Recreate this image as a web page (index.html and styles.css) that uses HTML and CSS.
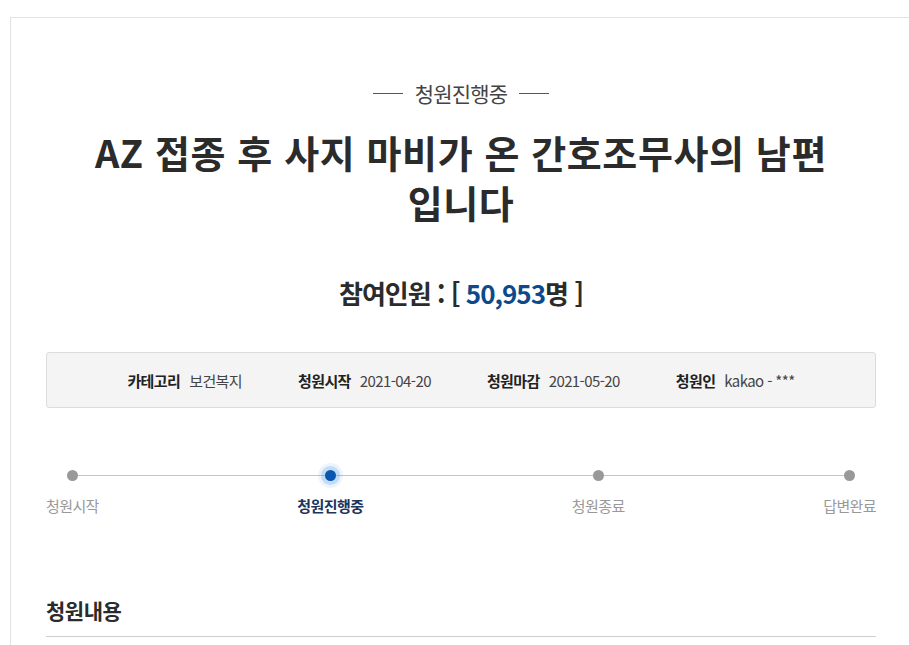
FILE: index.html
```html
<!DOCTYPE html>
<html lang="ko">
<head>
    <meta charset="UTF-8">
    <meta name="viewport" content="width=device-width, initial-scale=1.0">
    <title>청원진행중</title>
    <link rel="stylesheet" href="styles.css">
</head>
<body>

<div class="petition">
    <!-- status -->
    <p class="status"><span class="dash"></span>청원진행중<span class="dash"></span></p>

    <h1 class="title">AZ 접종 후 사지 마비가 온 간호조무사의 남편<br>입니다</h1>

    <h2 class="count">참여인원 : [ <span class="num">50,953</span>명 ]</h2>

    <!-- info box -->
    <ul class="info">
        <li><strong>카테고리</strong>보건복지</li>
        <li><strong>청원시작</strong>2021-04-20</li>
        <li><strong>청원마감</strong>2021-05-20</li>
        <li><strong>청원인</strong>kakao - ***</li>
    </ul>

    <!-- progress -->
    <ol class="steps">
        <li class="step"><span class="dot"></span>청원시작</li>
        <li class="step active"><span class="dot"></span>청원진행중</li>
        <li class="step"><span class="dot"></span>청원종료</li>
        <li class="step"><span class="dot"></span>답변완료</li>
    </ol>

    <h3 class="section">청원내용</h3>
</div>

</body>
</html>
```

FILE: styles.css
```css
* {
    box-sizing: border-box;
}
body {
    margin: 0;
    padding: 0;
    background: #fff;
    font-family: "Noto Sans CJK KR", "Noto Sans", sans-serif;
    color: #333;
}
.petition {
    margin: 17px 0 0 10px;
    width: 936px;
    padding: 60px 70px 0 35px;
    border-top: 1px solid #e2e2e2;
    border-left: 1px solid #e2e2e2;
    height: 700px;
}
.status {
    margin: 0;
    display: flex;
    justify-content: center;
    align-items: center;
    gap: 12px;
    font-size: 21px;
    line-height: 30px;
    font-weight: 400;
    letter-spacing: -0.8px;
    color: #444;
}
.dash {
    width: 30px;
    border-top: 1px solid #555;
}
.title {
    margin: 19px 0 0;
    text-align: center;
    font-size: 38px;
    line-height: 50px;
    font-weight: 700;
    letter-spacing: 0.6px;
    color: #2b2b2b;
}
.count {
    margin: 48px 0 0;
    text-align: center;
    font-size: 26px;
    line-height: 36px;
    font-weight: 700;
    letter-spacing: -1px;
    color: #2b2b2b;
}
.count .num {
    color: #0d4a8c;
}
.info {
    list-style: none;
    margin: 41px 0 0;
    padding: 0;
    height: 56px;
    display: flex;
    justify-content: center;
    align-items: center;
    gap: 56px;
    background: #f4f4f4;
    border: 1px solid #dcdcdc;
    border-radius: 3px;
    font-size: 15px;
    letter-spacing: -0.6px;
    color: #444;
}
.info li strong {
    font-weight: 700;
    color: #222;
    margin-right: 9px;
}
.steps {
    list-style: none;
    margin: 62px 0 0;
    padding: 0;
    display: flex;
    justify-content: space-between;
    position: relative;
}
.steps::before {
    content: "";
    position: absolute;
    left: 27px;
    right: 27px;
    top: 5px;
    border-top: 1px solid #c4c4c4;
}
.step {
    display: flex;
    flex-direction: column;
    align-items: center;
    font-size: 15px;
    letter-spacing: -0.6px;
    color: #999;
    position: relative;
}
.dot {
    width: 11px;
    height: 11px;
    border-radius: 50%;
    background: #999;
    margin-bottom: 14px;
}
.step.active {
    color: #1c355e;
    font-weight: 700;
    margin-right: 10px;
}
.step.active .dot {
    background: #0b57b0;
    box-shadow: 0 0 0 4px rgba(70, 150, 230, 0.25), 0 0 0 7px rgba(70, 150, 230, 0.1);
}
.section {
    margin: 79px 0 0;
    padding-bottom: 11px;
    border-bottom: 1px solid #cfcfcf;
    font-size: 21px;
    line-height: 30px;
    font-weight: 700;
    letter-spacing: -0.5px;
    color: #2b2b2b;
}
```
